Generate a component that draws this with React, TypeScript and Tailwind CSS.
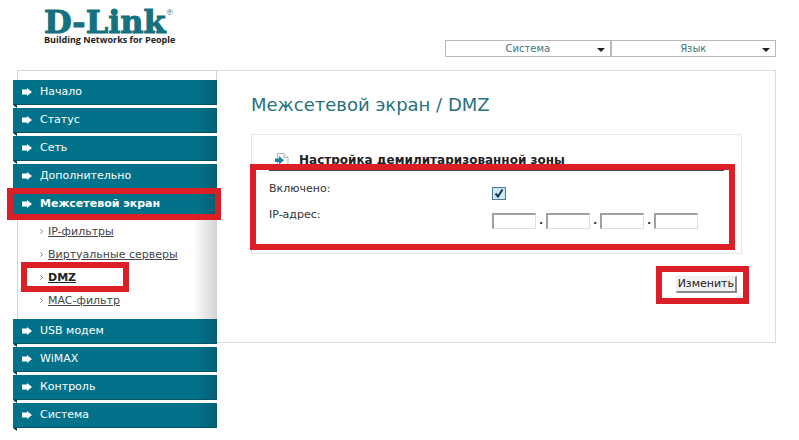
import React from 'react';

interface MenuItem {
    label: string;
    active?: boolean;
    children?: { label: string; current?: boolean }[];
}

const MENU: MenuItem[] = [
    { label: 'Начало' },
    { label: 'Статус' },
    { label: 'Сеть' },
    { label: 'Дополнительно' },
    {
        label: 'Межсетевой экран',
        active: true,
        children: [
            { label: 'IP-фильтры' },
            { label: 'Виртуальные серверы' },
            { label: 'DMZ', current: true },
            { label: 'MAC-фильтр' },
        ],
    },
    { label: 'USB модем' },
    { label: 'WiMAX' },
    { label: 'Контроль' },
    { label: 'Система' },
];

// Red frame drawn over the element it marks
const Highlight = ({ className }: { className: string }) => (
    <span aria-hidden="true" className={`pointer-events-none absolute z-10 border-[#dc1f26] ${className}`} />
);

const ArrowIcon = () => (
    <svg width="10" height="8" viewBox="0 0 10 8" fill="#fff" className="shrink-0">
        <path d="M0 1.500h5V0l5 4-5 4V6.500H0z" />
    </svg>
);

const PageIcon = () => (
    <svg width="14" height="16" viewBox="0 0 14 16" className="shrink-0">
        <path d="M2.5 1.5h6.500l4 4v9H2.500z" fill="#fbfcfd" stroke="#a9b4bd" />
        <path d="M9 1.500v4h4" fill="#e8edf1" stroke="#a9b4bd" />
        <path d="M0 6.500h4V4l5 4.200-5 4.200V10H0z" fill="#1f7fa6" />
    </svg>
);

const HeaderSelect = ({ label }: { label: string }) => (
    <div className="relative w-1/2">
        <select
            aria-label={label}
            className="block h-[17px] w-full appearance-none border border-[#b9b9b9] bg-white text-[10px] leading-[15px] text-[#3f7480] [text-align-last:center]"
        >
            <option>{label}</option>
        </select>
        <svg width="8" height="4" viewBox="0 0 8 4" className="pointer-events-none absolute top-[8px] right-[6px]">
            <path d="M0 0h8L4 4z" fill="#222" />
        </svg>
    </div>
);

const Sidebar = () => (
    <nav className="w-[204px] shrink-0">
        <div className="ml-1 h-[10px] border-t border-l border-r border-[#d3d3d3]" />
        {MENU.map((item) => (
            <div key={item.label}>
                <a
                    href="#"
                    className={`relative flex h-[25px] items-center gap-2 border-b border-[#045564] bg-[#02728a] bg-linear-to-r from-[#02728a] from-90% to-[#056073] pl-[9px] text-[11px] text-white ${item.active ? 'font-bold' : ''}`}
                >
                    <ArrowIcon />
                    <span className="leading-4">{item.label}</span>
                    {item.active && <Highlight className="-top-1 -right-1 -bottom-1 -left-[6px] border-[6px]" />}
                </a>
                {item.children ? (
                    <ul className="ml-1 flex h-[102px] flex-col border-l border-[#d3d3d3] bg-linear-to-r from-white from-88% to-[#d2d2d2] pt-[3px]">
                        {item.children.map((sub) => (
                            <li key={sub.label} className="relative flex h-[23px] items-center gap-[5px] pl-[22px] text-[11px] text-[#444]">
                                <svg width="3" height="5" viewBox="0 0 3 5" fill="none" stroke="#777">
                                    <path d="M.5.500l2 2-2 2" />
                                </svg>
                                <a href="#" className={`leading-4 underline ${sub.current ? 'font-bold text-[#222]' : ''}`}>
                                    {sub.label}
                                </a>
                                {sub.current && <Highlight className="-top-1 -bottom-[3px] left-[3px] w-[108px] border-[6px]" />}
                            </li>
                        ))}
                    </ul>
                ) : (
                    <svg width="4" height="3" viewBox="0 0 4 3" className="block">
                        <path d="M0 0h4v3z" fill="#033f4b" />
                    </svg>
                )}
            </div>
        ))}
    </nav>
);

const DmzForm = () => (
    <form className="pt-[22px] pr-[33px] pb-[49px] pl-[34px]" onSubmit={(e) => e.preventDefault()}>
        <h1 className="text-[18px] leading-6 text-[#27717f]">Межсетевой экран / DMZ</h1>

        <section className="relative mt-[17px] border border-[#e6e6e6] px-[17px] pt-[17px] pb-[24px]">
            <h2 className="flex items-center gap-[10px] border-b border-[#444] pb-[2px] pl-[6px] text-[12px] leading-4 font-bold text-[#222]">
                <PageIcon />
                Настройка демилитаризованной зоны
            </h2>
            <div className="mt-[10px] grid grid-cols-[223px_1fr] text-[11px] leading-4 text-[#333]">
                <label htmlFor="enabled" className="h-[26px]">Включено:</label>
                <div className="relative h-[26px] pt-[6px]">
                    <input
                        id="enabled"
                        type="checkbox"
                        defaultChecked
                        className="peer block h-[13px] w-[14px] appearance-none border border-[#4a7c98] bg-[#cfe6f3]"
                    />
                    <svg width="14" height="13" viewBox="0 0 14 13" fill="none" stroke="#16355c" strokeWidth="2" className="pointer-events-none absolute top-[6px] left-0 hidden peer-checked:block">
                        <path d="M3.500 6.500l2.500 3 4.500-7" />
                    </svg>
                </div>
                <label htmlFor="octet-1">IP-адрес:</label>
                <div className="flex items-center pt-[6px]">
                    {[1, 2, 3, 4].map((n) => (
                        <React.Fragment key={n}>
                            {n > 1 && <span className="w-[10px] text-center font-bold">.</span>}
                            <input
                                id={`octet-${n}`}
                                aria-label={`IP-адрес ${n}`}
                                className="h-[16px] w-[44px] border border-t-2 border-l-2 border-[#e0e0e0] border-t-[#a0a0a0] border-l-[#a0a0a0] bg-white px-1"
                            />
                        </React.Fragment>
                    ))}
                </div>
            </div>
            <Highlight className="top-[29px] right-[6px] bottom-[3px] -left-[2px] border-[6px]" />
        </section>

        <div className="mt-[22px] flex justify-end pr-[5px]">
            <div className="relative">
                <button
                    type="submit"
                    className="block h-[17px] border border-r-2 border-b-2 border-[#ececec] border-r-[#8a8a8a] border-b-[#8a8a8a] bg-[#f1f1f1] px-px text-[11px] leading-[14px] text-[#222]"
                >
                    Изменить
                </button>
                <Highlight className="-top-[10px] -right-[12px] -bottom-[11px] -left-[20px] border-[6px]" />
            </div>
        </div>
    </form>
);

export default function App() {
    return (
        <div className="min-h-screen bg-white pr-[23px] pb-3 pl-[13px] font-['DejaVu_Sans',Verdana,sans-serif]">
            <header className="flex h-[70px] items-start justify-between">
                <div className="pt-2 pl-[31px]">
                    <div className="flex h-[26px] items-start font-['DejaVu_Serif',serif] text-[32px] leading-[28px] font-bold text-[#14727f] [-webkit-text-stroke:1px_#14727f]">
                        D-Link
                        <span className="text-[8px] leading-[10px] font-normal [-webkit-text-stroke:0]">®</span>
                    </div>
                    <p className="font-['Open_Sans',sans-serif] text-[9px] leading-[12px] font-bold text-[#222]">
                        Building Networks for People
                    </p>
                </div>
                <div className="mt-[40px] flex w-[331px]">
                    <HeaderSelect label="Система" />
                    <HeaderSelect label="Язык" />
                </div>
            </header>
            <div className="flex items-start">
                <Sidebar />
                <main className="min-w-0 flex-1 border border-l-0 border-[#dcdcdc]">
                    <DmzForm />
                </main>
            </div>
        </div>
    );
}
